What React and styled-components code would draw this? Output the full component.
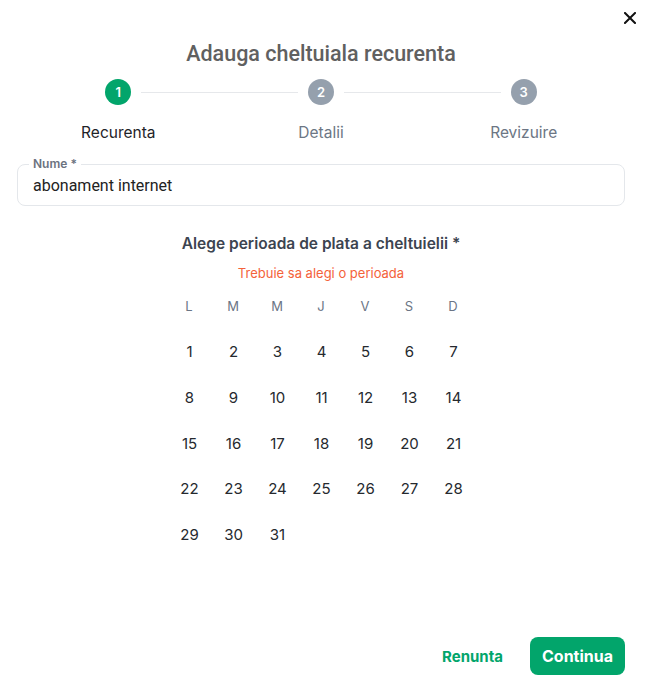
import React from 'react'
import styled, { createGlobalStyle } from 'styled-components'

const GlobalStyle = createGlobalStyle`
  html, body {
    margin: 0;
    padding: 0;
    background: #ffffff;
  }
  * {
    box-sizing: border-box;
  }
`;

const green = '#02a56b';

const Dialog = styled.div`
  position: relative;
  min-height: 100vh;
  display: flex;
  flex-direction: column;
  padding: 40px 20px 13px 17px;
  font-family: Inter, "Noto Sans", sans-serif;
  color: #1f2328;
`;

const CloseButton = styled.button`
  position: absolute;
  top: 9px;
  right: 6px;
  width: 18px;
  height: 18px;
  padding: 0;
  border: none;
  background: transparent;
  display: flex;
  align-items: center;
  justify-content: center;
  cursor: pointer;
`;

const Title = styled.h2`
  margin: 0;
  text-align: center;
  font-family: Roboto, "Noto Sans", sans-serif;
  font-size: 21.5px;
  font-weight: 500;
  line-height: 28px;
  color: #606060;
`;

const Stepper = styled.div`
  margin-top: 11px;
  display: grid;
  grid-template-columns: repeat(3, 1fr);
`;

const Step = styled.div`
  position: relative;
  display: flex;
  flex-direction: column;
  align-items: center;
`;

const Connector = styled.span`
  position: absolute;
  top: 13px;
  left: calc(-50% + 23px);
  right: calc(50% + 23px);
  border-top: 1px solid #e6e8eb;
`;

const Circle = styled.div`
  width: 26px;
  height: 26px;
  border-radius: 50%;
  background: ${({ $active }) => ($active ? green : '#95a0ad')};
  color: #ffffff;
  font-size: 13px;
  font-weight: 600;
  display: flex;
  align-items: center;
  justify-content: center;
`;

const StepLabel = styled.div`
  margin-top: 18px;
  font-size: 15.5px;
  line-height: 20px;
  color: ${({ $active }) => ($active ? '#1f2328' : '#6c7684')};
`;

const Field = styled.div`
  position: relative;
  margin-top: 21px;
  height: 42px;
  border: 1px solid #e4e7eb;
  border-radius: 8px;
  display: flex;
  align-items: center;
  padding: 0 15px;
`;

const FieldLabel = styled.label`
  position: absolute;
  top: -9px;
  left: 11px;
  padding: 0 4px;
  background: #ffffff;
  font-size: 12px;
  font-weight: 600;
  line-height: 16px;
  color: #6b7280;
`;

const Input = styled.input`
  width: 100%;
  border: none;
  outline: none;
  padding: 0;
  margin-top: 1px;
  font-family: Roboto, "Noto Sans", sans-serif;
  font-size: 16px;
  color: #222222;
  background: transparent;
`;

const Heading = styled.div`
  margin-top: 27px;
  text-align: center;
  font-size: 15.5px;
  font-weight: 600;
  line-height: 22px;
  color: #3c4450;
`;

const ErrorText = styled.div`
  margin-top: 9px;
  text-align: center;
  font-size: 13px;
  line-height: 18px;
  color: #f4623a;
`;

const Calendar = styled.div`
  margin: 1px auto 0;
  display: grid;
  grid-template-columns: repeat(7, 44px);
  grid-auto-rows: 45.75px;
`;

const WeekDay = styled.div`
  height: 46px;
  display: flex;
  align-items: center;
  justify-content: center;
  font-size: 13px;
  color: #6b7585;
`;

const Day = styled.button`
  border: none;
  background: transparent;
  padding: 0 0 0 1px;
  font-family: inherit;
  font-size: 15px;
  color: #25292e;
  display: flex;
  align-items: center;
  justify-content: center;
  cursor: pointer;
`;

const Footer = styled.div`
  margin-top: auto;
  display: flex;
  justify-content: flex-end;
  align-items: center;
  gap: 14px;
`;

const TextButton = styled.button`
  border: none;
  background: transparent;
  padding: 0 13px;
  height: 38px;
  font-family: inherit;
  font-size: 15px;
  font-weight: 700;
  color: ${green};
  cursor: pointer;
`;

const PrimaryButton = styled.button`
  border: none;
  background: ${green};
  border-radius: 8px;
  height: 38px;
  padding: 0 12px;
  font-family: inherit;
  font-size: 16px;
  font-weight: 700;
  color: #ffffff;
  cursor: pointer;
`;

const steps = ['Recurenta', 'Detalii', 'Revizuire'];
const weekDays = ['L', 'M', 'M', 'J', 'V', 'S', 'D'];
const days = Array.from({ length: 31 }, (_, i) => i + 1);

const App = () => {
  return (
    <>
      <GlobalStyle />
      <Dialog>
        <CloseButton aria-label="Inchide">
          <svg width="12" height="12" viewBox="0 0 12 12">
            <path d="M1 1 L11 11 M11 1 L1 11" stroke="#111" strokeWidth="2" strokeLinecap="square" />
          </svg>
        </CloseButton>
        <Title>Adauga cheltuiala recurenta</Title>
        <Stepper>
          {steps.map((s, i) => (
            <Step key={s}>
              {i > 0 && <Connector />}
              <Circle $active={i === 0}>{i + 1}</Circle>
              <StepLabel $active={i === 0}>{s}</StepLabel>
            </Step>
          ))}
        </Stepper>
        <Field>
          <FieldLabel>Nume *</FieldLabel>
          <Input defaultValue="abonament internet" />
        </Field>
        <Heading>Alege perioada de plata a cheltuielii *</Heading>
        <ErrorText>Trebuie sa alegi o perioada</ErrorText>
        <Calendar>
          {weekDays.map((d, i) => (
            <WeekDay key={i}>{d}</WeekDay>
          ))}
          {days.map((d) => (
            <Day key={d}>{d}</Day>
          ))}
        </Calendar>
        <Footer>
          <TextButton>Renunta</TextButton>
          <PrimaryButton>Continua</PrimaryButton>
        </Footer>
      </Dialog>
    </>
  )
}

export default App
